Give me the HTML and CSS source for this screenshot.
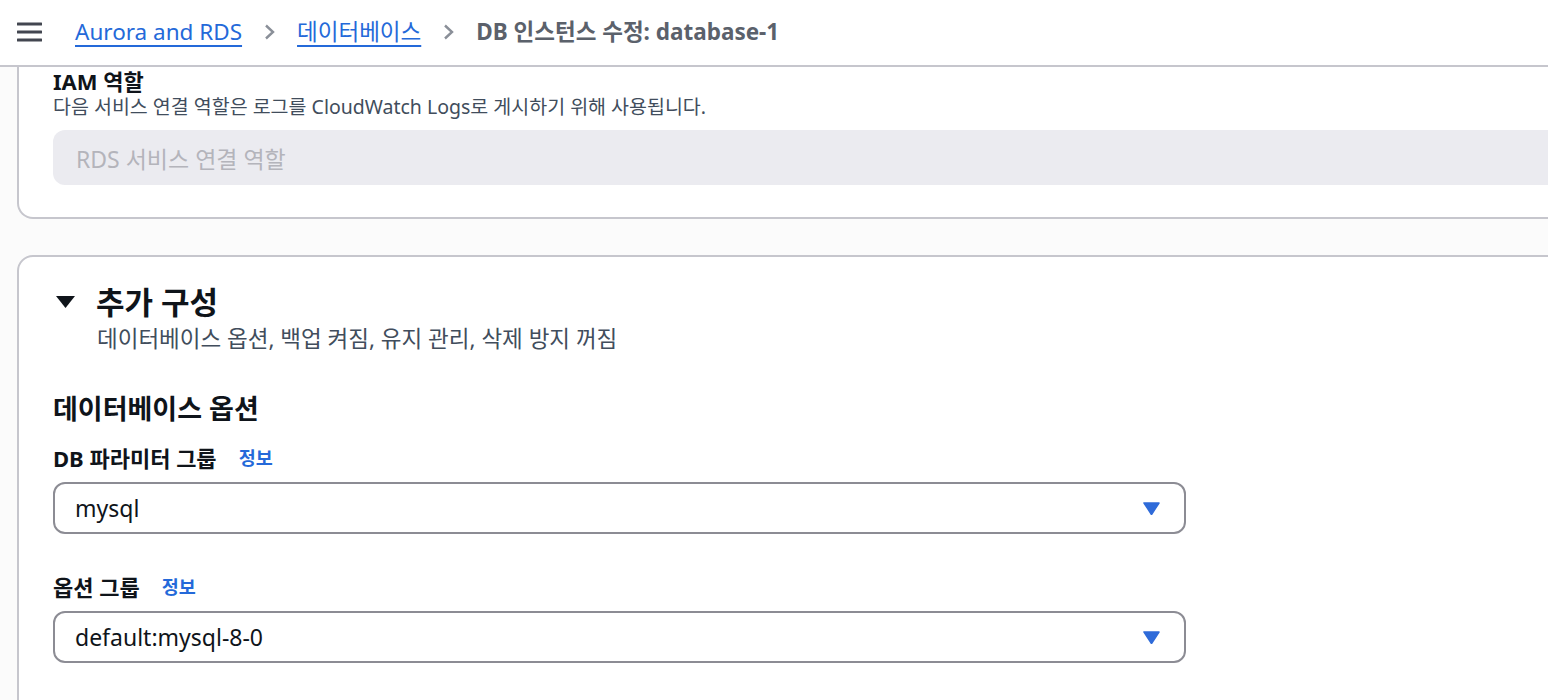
FILE: index.html
```html
<!DOCTYPE html>
<html lang="ko">
<head>
<meta charset="utf-8">
<title>DB 인스턴스 수정: database-1</title>
<link rel="stylesheet" href="styles.css">
</head>
<body>
<header class="topbar">
  <svg class="menu-icon" width="25" height="20" viewBox="0 0 25 20" aria-hidden="true">
    <rect x="0" y="0.5" width="25" height="3" rx="0.5"/>
    <rect x="0" y="8.5" width="25" height="3" rx="0.5"/>
    <rect x="0" y="16.5" width="25" height="3" rx="0.5"/>
  </svg>
  <nav class="crumbs">
    <a class="crumb-link" href="#">Aurora and RDS</a>
    <svg class="crumb-sep" width="13" height="16" viewBox="0 0 13 16" aria-hidden="true"><path d="M3 1.5 L10 8 L3 14.5"/></svg>
    <a class="crumb-link" href="#">데이터베이스</a>
    <svg class="crumb-sep" width="13" height="16" viewBox="0 0 13 16" aria-hidden="true"><path d="M3 1.5 L10 8 L3 14.5"/></svg>
    <span class="crumb-current">DB 인스턴스 수정: database-1</span>
  </nav>
</header>

<main class="content">
  <section class="card card-clipped">
    <div class="field-label iam-label">IAM 역할</div>
    <div class="field-desc">다음 서비스 연결 역할은 로그를 CloudWatch Logs로 게시하기 위해 사용됩니다.</div>
    <div class="input-disabled">RDS 서비스 연결 역할</div>
  </section>

  <section class="card card-open">
    <div class="expand-head">
      <svg class="caret" width="19" height="12" viewBox="0 0 19 12" aria-hidden="true"><path d="M0 0 H19 L9.5 12 Z"/></svg>
      <h2 class="expand-title">추가 구성</h2>
    </div>
    <div class="expand-desc">데이터베이스 옵션, 백업 켜짐, 유지 관리, 삭제 방지 꺼짐</div>

    <h3 class="sub-title">데이터베이스 옵션</h3>

    <div class="field-row">
      <span class="field-label">DB 파라미터 그룹</span>
      <a class="info-link" href="#">정보</a>
    </div>
    <div class="select">
      <span class="select-value">mysql</span>
      <svg class="select-arrow" width="17" height="13" viewBox="0 0 17 13" aria-hidden="true"><path d="M1 1 H16 L8.5 12.5 Z" stroke-linejoin="round"/></svg>
    </div>

    <div class="field-row field-row-spaced">
      <span class="field-label">옵션 그룹</span>
      <a class="info-link" href="#">정보</a>
    </div>
    <div class="select">
      <span class="select-value">default:mysql-8-0</span>
      <svg class="select-arrow" width="17" height="13" viewBox="0 0 17 13" aria-hidden="true"><path d="M1 1 H16 L8.5 12.5 Z" stroke-linejoin="round"/></svg>
    </div>
  </section>
</main>
</body>
</html>
```

FILE: styles.css
```css
* { box-sizing: border-box; }

html, body {
  margin: 0;
  padding: 0;
}

body {
  width: 1548px;
  height: 700px;
  overflow: hidden;
  background: #fbfbfb;
  font-family: "Noto Sans", "Noto Sans CJK KR", sans-serif;
  color: #0f141a;
}

.topbar {
  height: 67px;
  background: #ffffff;
  border-bottom: 2px solid #c6c6cd;
  display: flex;
  align-items: center;
  padding-left: 17px;
  padding-bottom: 2px;
}

.menu-icon {
  fill: #424650;
  flex: none;
}

.crumbs {
  display: flex;
  align-items: center;
  margin-left: 33px;
  font-size: 22.5px;
  line-height: 30px;
}

.crumb-link {
  color: #2469d9;
  text-decoration: underline;
  text-decoration-thickness: 2px;
  text-underline-offset: 5px;
}

.crumb-sep {
  fill: none;
  stroke: #8a8f98;
  stroke-width: 2.4;
  margin: 0 21px 0 21px;
}

.crumb-current {
  color: #5b616b;
  font-weight: bold;
}

.content {
  padding-left: 17px;
}

.card {
  background: #ffffff;
  border: 2px solid #c6c6cd;
  width: 1580px;
  padding-left: 34px;
}

.card-clipped {
  border-top: none;
  border-radius: 0 0 16px 16px;
  padding-top: 1px;
  padding-bottom: 32px;
}

.card-open {
  margin-top: 36px;
  border-radius: 16px;
  padding-top: 27px;
  height: 480px;
}

.field-label {
  font-size: 22px;
  line-height: 24px;
  font-weight: bold;
}

.iam-label {
  line-height: 26px;
}

.field-desc {
  margin-top: 1px;
  font-size: 19.5px;
  line-height: 24px;
  color: #414d5c;
}

.input-disabled {
  margin-top: 11px;
  height: 55px;
  background: #ebebf0;
  border-radius: 12px;
  display: flex;
  align-items: center;
  padding-left: 23px;
  font-size: 23px;
  color: #b4b4bb;
}

.expand-head {
  display: flex;
  align-items: center;
  height: 36px;
}

.caret {
  fill: #0f141a;
  margin-left: 3px;
  margin-right: 21px;
  flex: none;
}

.expand-title {
  margin: 0;
  font-size: 31px;
  line-height: 36px;
  font-weight: bold;
}

.expand-desc {
  margin-top: 5px;
  padding-left: 44px;
  font-size: 22.5px;
  line-height: 28px;
  color: #414d5c;
}

.sub-title {
  margin: 40px 0 0 0;
  font-size: 27px;
  line-height: 32px;
  font-weight: bold;
}

.field-row {
  margin-top: 21px;
  height: 24px;
  display: flex;
  align-items: center;
  gap: 22px;
}

.field-row-spaced {
  margin-top: 41px;
}

.info-link {
  color: #2469d9;
  font-size: 18.5px;
  line-height: 24px;
  font-weight: bold;
  text-decoration: none;
}

.select {
  margin-top: 12px;
  width: 1133px;
  height: 52px;
  border: 2px solid #8c8c94;
  border-radius: 12px;
  display: flex;
  align-items: center;
  justify-content: space-between;
  padding-left: 20px;
  padding-right: 24px;
}

.select-value {
  font-size: 23px;
  line-height: 30px;
  color: #0f141a;
}

.select-arrow {
  fill: #2f6bd9;
  stroke: #2f6bd9;
  stroke-width: 1.5;
  flex: none;
}
```
